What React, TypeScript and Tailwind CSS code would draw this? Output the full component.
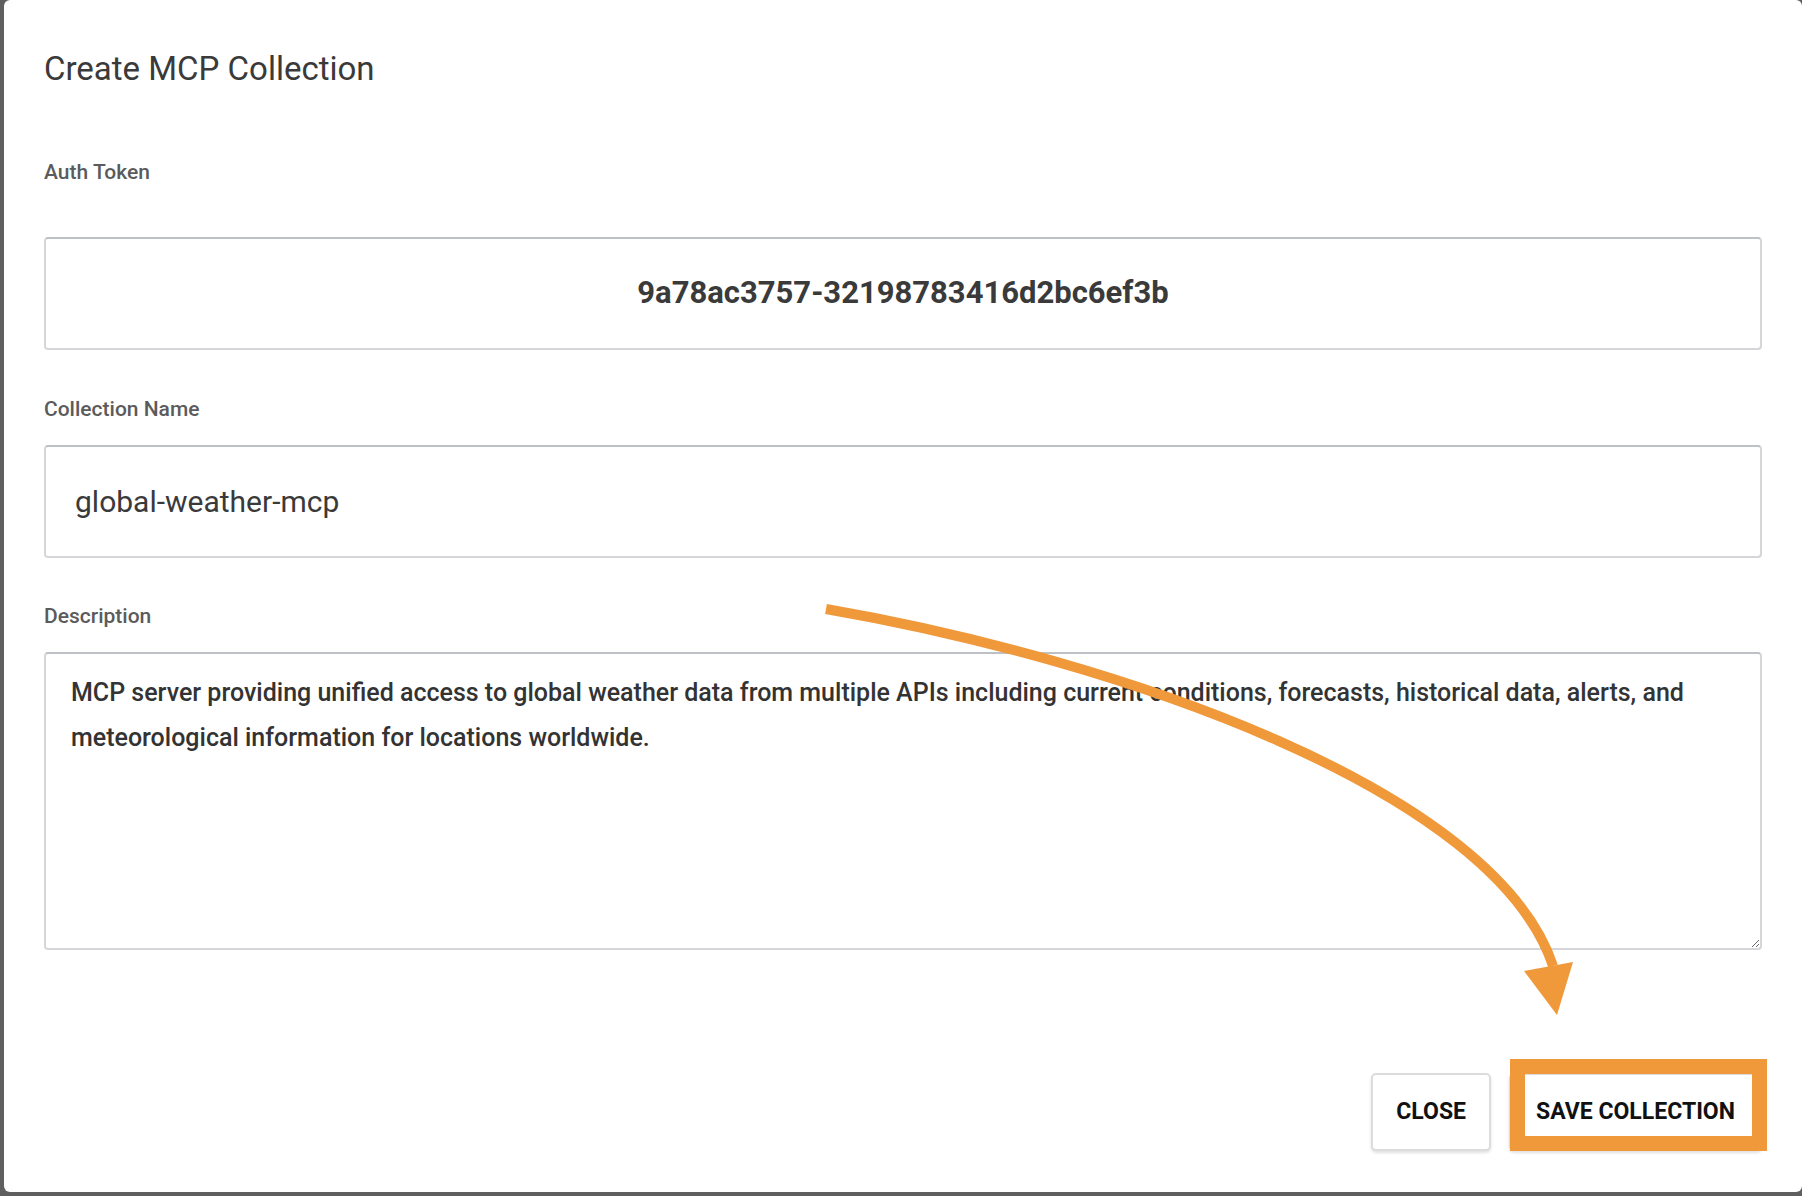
import React from "react";

const TOKEN = "9a78ac3757-32198783416d2bc6ef3b";
const DESCRIPTION =
  "MCP server providing unified access to global weather data from multiple APIs including current conditions, forecasts, historical data, alerts, and\nmeteorological information for locations worldwide.";

const FieldLabel: React.FC<{ children: React.ReactNode; className?: string }> = ({ children, className }) => (
  <label className={`block text-[21px] leading-[21px] font-medium text-[#5b5b5b] ${className ?? ""}`}>{children}</label>
);

export default function App() {
  return (
    <div className="relative w-[1802px] h-[1196px] overflow-hidden bg-[#5f5f5f] pl-[4px] font-['Roboto',sans-serif]">
      <div className="h-[1192px] rounded-[6px] bg-white px-[40px] pt-[52px] flex flex-col">
        <h2 className="text-[33px] leading-[33px] text-[#3a3a3a]">Create MCP Collection</h2>

        <FieldLabel className="mt-[77px]">Auth Token</FieldLabel>
        <div className="mt-[54px] h-[113px] rounded-[4px] border-2 border-[#d4d6da] border-t-[#bdc1c6] flex items-center justify-center">
          <span className="text-[31px] font-bold text-[#3a3a3a]">{TOKEN}</span>
        </div>

        <FieldLabel className="mt-[49px]">Collection Name</FieldLabel>
        <input
          readOnly
          value="global-weather-mcp"
          className="mt-[25px] h-[113px] w-full rounded-[4px] border-2 border-[#d4d6da] border-t-[#bdc1c6] pl-[29px] text-[30px] text-[#3a3a3a] outline-none"
        />

        <FieldLabel className="mt-[48px]">Description</FieldLabel>
        <textarea
          readOnly
          wrap="off"
          value={DESCRIPTION}
          className="mt-[25px] h-[298px] w-full rounded-[4px] border-2 border-[#d4d6da] border-t-[#bdc1c6] px-[25px] pt-[16px] text-[25px] leading-[45px] font-medium text-[#333] outline-none overflow-hidden resize"
        />

        <div className="mt-[123px] flex justify-end gap-[18px]">
          <button className="h-[78px] rounded-[5px] border-2 border-[#dcdcdc] bg-white px-[23px] text-[23px] font-bold text-[#111] shadow-[0_2px_3px_rgba(0,0,0,0.12)]">
            CLOSE
          </button>
          <div className="relative">
            <button className="h-[78px] w-[253px] rounded-[5px] border-2 border-[#dcdcdc] bg-white text-[23px] font-bold text-[#111] shadow-[0_2px_3px_rgba(0,0,0,0.12)]">
              SAVE COLLECTION
            </button>
            {/* highlight box drawn over the save button */}
            <div className="pointer-events-none absolute left-[1px] -top-[14px] -right-[5px] bottom-0 border-[15px] border-[#f0993a]" />
          </div>
        </div>
      </div>

      {/* annotation arrow */}
      <svg className="pointer-events-none absolute inset-0" width="1802" height="1196" viewBox="0 0 1802 1196">
        <path d="M826,609 C1120,660 1495,790 1553,966" fill="none" stroke="#f0993a" strokeWidth="10" />
        <polygon points="1524,971 1573,962 1557,1015" fill="#f0993a" />
      </svg>
    </div>
  );
}
